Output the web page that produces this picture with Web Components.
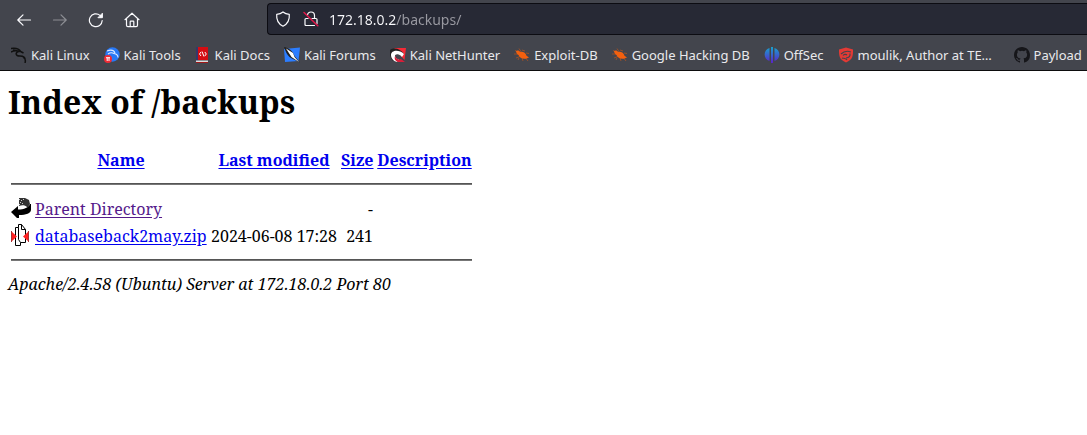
<!DOCTYPE html>
<html lang="en">
<head>
<meta charset="utf-8">
<title>Index of /backups</title>
<style>
body { margin: 0; background: #fff; color: #000; font-family: "Noto Serif", "Noto Sans", serif; }
</style>
</head>
<body>
<browser-window></browser-window>

<template id="window-tpl">
<style>
:host { display: block; overflow: hidden; }
</style>
<nav-toolbar></nav-toolbar>
<bookmarks-bar>
  <bookmark-item icon="kali">Kali Linux</bookmark-item>
  <bookmark-item icon="tools">Kali Tools</bookmark-item>
  <bookmark-item icon="docs">Kali Docs</bookmark-item>
  <bookmark-item icon="forums">Kali Forums</bookmark-item>
  <bookmark-item icon="nethunter">Kali NetHunter</bookmark-item>
  <bookmark-item icon="bug">Exploit-DB</bookmark-item>
  <bookmark-item icon="bug">Google Hacking DB</bookmark-item>
  <bookmark-item icon="offsec">OffSec</bookmark-item>
  <bookmark-item icon="shield" clipped>moulik, Author at TE…</bookmark-item>
  <bookmark-item icon="github">Payload</bookmark-item>
</bookmarks-bar>
<directory-index></directory-index>
</template>

<template id="toolbar-tpl">
<style>
:host { display: flex; align-items: center; height: 40px; padding-left: 8px; box-sizing: border-box; background: #43454d; color: #fbfbfe; }
nav { display: flex; gap: 4px; margin-right: 119px; }
button { width: 32px; height: 32px; padding: 0; border: 0; background: none; color: inherit; display: grid; place-items: center; }
button:disabled { opacity: .4; }
svg { width: 16px; height: 16px; fill: none; stroke: currentColor; stroke-width: 1.2; stroke-linecap: round; stroke-linejoin: round; flex: none; }
.url { flex: 1; display: flex; align-items: center; height: 32px; box-sizing: border-box; border: 1px solid #0c0c12; border-right: 0; border-radius: 4px 0 0 4px; background: #272935; padding-left: 7px; margin-bottom: 2px; }
.url svg + svg { margin-left: 12px; }
input { flex: 1; min-width: 0; margin: 0 0 0 10px; padding: 0; border: 0; outline: 0; height: 24px; font: 14px "Noto Sans", sans-serif; color: transparent; background: linear-gradient(90deg, #fbfbfe 67px, #9a9aa2 67px); -webkit-background-clip: text; background-clip: text; }
</style>
<nav aria-label="Navigation">
  <button aria-label="Back"><svg viewBox="0 0 16 16"><path d="M14.5 8H1.8M7 2.8 1.8 8 7 13.2"/></svg></button>
  <button aria-label="Forward" disabled><svg viewBox="0 0 16 16"><path d="M1.500 8h12.700M9 2.800 14.200 8 9 13.200"/></svg></button>
  <button aria-label="Reload"><svg viewBox="0 0 16 16"><path d="M14.200 8.500A6.400 6.400 0 1 1 12 3.400l1 .9"/><path d="M14.400 1.600v4.100h-4.100z" fill="currentColor" stroke-width="1"/></svg></button>
  <button aria-label="Home"><svg viewBox="0 0 16 16"><path d="M1 7.700 8 1.200l7 6.500M2.500 7v6.200c0 .9.5 1.400 1.400 1.400h8.200c.9 0 1.400-.5 1.400-1.400V7M6.200 14.500V9.800c0-.4.2-.6.6-.6h2.400c.4 0 .6.2.6.6v4.700"/></svg></button>
</nav>
<div class="url">
  <svg viewBox="0 0 16 16"><path d="M8 1C6.300 2.500 4 3.200 1.700 3.300 1.300 8.500 3.200 13 8 15.200 12.800 13 14.700 8.500 14.300 3.300 12 3.200 9.700 2.500 8 1z"/></svg>
  <svg viewBox="0 0 16 16"><path d="M4.500 4.200C4.700 2 6 1 8 1s3.500 1.300 3.500 3.500v3M9 7.500h3.900c.7 0 1.100.4 1.100 1.100v3.900M11.500 14.500H3.100c-.7 0-1.100-.4-1.100-1.100V8.600c0-.7.4-1.100 1.100-1.100h2"/><path d="M1 1.500 14.800 14.800" stroke="#e3174a" stroke-width="1.500"/></svg>
  <input type="text" aria-label="Address" value="172.18.0.2/backups/">
</div>
</template>

<template id="bookmarks-tpl">
<style>
:host { display: flex; gap: 14px; height: 31px; padding: 0 0 0 11px; box-sizing: border-box; border-bottom: 1px solid #0c0c0d; background: #43454d; overflow: hidden; }
</style>
<slot></slot>
</template>

<template id="bookmark-tpl">
<style>
:host { display: block; flex: none; }
:host([clipped]) { width: 162px; }
a { display: flex; align-items: center; gap: 4px; height: 30px; color: #e9e9ec; text-decoration: none; font: 13px "Noto Sans", sans-serif; white-space: nowrap; }
svg { width: 16px; height: 16px; flex: none; }
</style>
<a href="#"><svg viewBox="0 0 16 16" aria-hidden="true"></svg><span><slot></slot></span></a>
</template>

<template id="index-tpl">
<style>
:host { display: block; padding: 9px 8px 8px; font-size: 16px; line-height: 22px; }
h1 { margin: 0 0 21px; font-size: 32px; line-height: 44px; }
table { table-layout: fixed; width: 467px; border-spacing: 2px; }
th, td { padding: 2px 1px 0; white-space: nowrap; line-height: 23px; }
th { text-align: center; }
td { text-align: left; }
td.num { text-align: right; }
.icon { width: 22px; box-sizing: border-box; }
.name { width: 174px; box-sizing: border-box; }
.date { width: 128px; box-sizing: border-box; }
.size { width: 34px; box-sizing: border-box; }
hr { height: 2px; margin: 8px 0; border: 0; box-sizing: border-box; border-top: 1px solid #555; border-bottom: 1px solid #777; }
.rule { line-height: 0; padding: 1px; }
td.pic { padding: 0 1px 1px; }
a { color: #00e; text-underline-offset: 2px; }
a.visited { color: #551a8b; }
svg { display: block; width: 20px; height: 22px; }
address { font-style: italic; margin-top: 1px; }
</style>
<h1>Index of /backups</h1>
<table>
  <colgroup><col class="icon"><col class="name"><col class="date"><col class="size"><col></colgroup>
  <tr><th></th><th><a href="#">Name</a></th><th><a href="#">Last modified</a></th><th><a href="#">Size</a></th><th><a href="#">Description</a></th></tr>
  <tr><th colspan="5" class="rule"><hr></th></tr>
  <tr>
    <td class="pic"><svg viewBox="0 0 20 22" role="img" aria-label="Parent"><path d="M8 1h6l4 2 1 4-2 3h-1c-2-2-5-2-8-1z" fill="#333"/><path d="M8 2h1v1H8zM10 3h1v1h-1zM9 5h1v1H9zM11 6h1v1h-1zM12 2h1v1h-1zM8 7h1v1H8z" fill="#ccc"/><path d="M0 15 7 9v3.500c6 0 11-2 12-5.500h1v5.500c0 4-5 5.500-12 5.500v3H6z"/></svg></td>
    <td><a class="visited" href="#">Parent Directory</a></td><td></td><td class="num">-</td><td></td>
  </tr>
  <tr>
    <td class="pic"><svg viewBox="0 0 20 22" role="img" aria-label="Archive"><path d="M4.500 3.500h3v-3h3l4 5v13h-5v3h-5z" fill="#fff" stroke="#000"/><path d="M7.500 3.500v12l2 3M10.500.5v5h4" fill="none" stroke="#000"/><path d="M0 7l6 5.500L0 18zM18 7l-6 5.500 6 5.500z" fill="#f22"/><path d="M.5 7v11M17.500 7v11" stroke="#a33"/></svg></td>
    <td><a href="#">databaseback2may.zip</a></td><td class="num">2024-06-08 17:28</td><td class="num">241</td><td></td>
  </tr>
  <tr><th colspan="5" class="rule"><hr></th></tr>
</table>
<address>Apache/2.4.58 (Ubuntu) Server at 172.18.0.2 Port 80</address>
</template>

<script>
const icons = {
  kali: '<path d="M0 1.500c4-.7 8 .1 10 3.300M0 5c3-1.700 6-1.600 9-.4M2 3l7 1.500M8.500 4.200C3.500 5.400 4.500 9 9 9c3.500 0 5.500 1.500 5 4M9.500 4.500l3 1.500M12 10c2 1 3 2.700 2 6" fill="none" stroke="#111" stroke-width="1.500"/>',
  tools: '<circle cx="8.500" cy="7.500" r="7.200" fill="#2878f5"/><path d="M3 4c4-1.500 7-.5 8 2M4 7c2-1.500 4-1.500 6-.5 3 .5 4 2 4 4" fill="none" stroke="#dce9ff" stroke-width="1.100"/><circle cx="4" cy="12" r="4" fill="#f02b35"/><path d="M2 10.700h4M3.200 11v3M5 11v3" stroke="#fff"/>',
  docs: '<path d="M1 0h2v15H1z" fill="#35376b"/><path d="M3 0h10v13H3z" fill="#d40d12"/><path d="M1 13.500h12V15H1z" fill="#ddd"/><path d="M1 15h12v1H1z" fill="#a01818"/><path d="M6 5 4.500 7 6 9M9.800 5l1.500 2-1.500 2M7 4.500l2 5" fill="none" stroke="#fff"/>',
  forums: '<path d="M0 2 16 .5 14.500 14 1 15z" fill="#2c7dff"/><path d="M0 0c4 .5 9 4 10.500 9L16 15.500 8 11.500C4.500 10 2 6 0 0z" fill="#222"/><path d="M2 1.500 9 6l1.500 4L15 15 7.500 10z" fill="#fff"/>',
  nethunter: '<path d="M4 1 16 1 14.500 13z" fill="#f52a36"/><path d="M0 3c4-3 11-1 14 4l-3 2C8 6 5 7 5 10l5 4H3C0 11-.5 6 0 3z" fill="#222"/><path d="M1 8c0-5 8-6 13-1l-2 3C9 6 5 7 5 9s2 3 4 3.500L7 15C3 14 1 11 1 8z" fill="#fff"/><path d="M5 9c1 3 4 4 6 3l4 3H8c-3-1-4-3-3-6z" fill="#d91e39"/>',
  bug: '<path d="M1 3.500l4 2M0 7h5M2 11l4-1.500M5 1.500l2 3M8 3l3 1M12 6l3 .5M11 10l3 4M8 11l1 3M5 11l-1 2" stroke="#a95222" fill="none" stroke-width=".8"/><path d="M2 4c1.500-1 3-.5 4 .8 3-.6 6 1 6.500 4l2.500 1.700-2.500 1C9 12.500 5.500 11 4.500 8 3 7 2 5.500 2 4z" fill="#f3600f"/>',
  offsec: '<defs><linearGradient id="g" gradientUnits="userSpaceOnUse" x1="0" y1="0" x2="0" y2="16"><stop stop-color="#16a3cf"/><stop offset="1" stop-color="#5b21c9"/></linearGradient></defs><path d="M5.500 1v13C-1 12-1 3 5.500 1zM10.500 1v13c6.500-2 6.500-11 0-13zM7 0h2v16H7z" fill="url(#g)"/>',
  shield: '<path d="M1 2.500 8 .5l7 2c0 6 0 10-7 13-7-3-7-7-7-13z" fill="#e33a35"/><path d="M3 7c3-3 6-3.500 10-2M5 8.500c1-1.500 3-1.500 4-.5M12 6.500c.5 3-1 4-4 4.500M4 11c2 .5 4 0 5 2" fill="none" stroke="#43454d" stroke-width="1.200"/>',
  github: '<path fill="#16161a" d="M8 0C3.580 0 0 3.580 0 8c0 3.540 2.290 6.530 5.470 7.590.4.070.55-.17.55-.38 0-.19-.01-.82-.01-1.490-2.010.37-2.530-.49-2.690-.94-.09-.23-.48-.94-.82-1.130-.28-.15-.68-.52-.01-.53.63-.01 1.080.58 1.230.82.72 1.210 1.870.87 2.330.66.07-.52.28-.87.51-1.070-1.780-.2-3.640-.89-3.640-3.950 0-.87.31-1.590.82-2.150-.08-.2-.36-1.020.08-2.120 0 0 .67-.21 2.200.82a7.420 7.420 0 0 1 4 0c1.530-1.040 2.200-.82 2.200-.82.44 1.100.16 1.920.08 2.120.51.56.82 1.270.82 2.150 0 3.070-1.870 3.750-3.650 3.950.29.25.54.73.54 1.480 0 1.070-.01 1.930-.01 2.200 0 .21.15.46.55.38A8.010 8.010 0 0 0 16 8c0-4.420-3.580-8-8-8z"/>'
};

class TemplateElement extends HTMLElement {
  constructor() {
    super();
    this.attachShadow({ mode: 'open' })
      .append(document.getElementById(this.constructor.template).content.cloneNode(true));
  }
}
customElements.define('directory-index', class extends TemplateElement { static template = 'index-tpl'; });
customElements.define('bookmark-item', class extends TemplateElement {
  static template = 'bookmark-tpl';
  connectedCallback() {
    this.shadowRoot.querySelector('svg').innerHTML = icons[this.getAttribute('icon')] || '';
  }
});
customElements.define('bookmarks-bar', class extends TemplateElement { static template = 'bookmarks-tpl'; });
customElements.define('nav-toolbar', class extends TemplateElement { static template = 'toolbar-tpl'; });
customElements.define('browser-window', class extends TemplateElement { static template = 'window-tpl'; });
</script>
</body>
</html>
